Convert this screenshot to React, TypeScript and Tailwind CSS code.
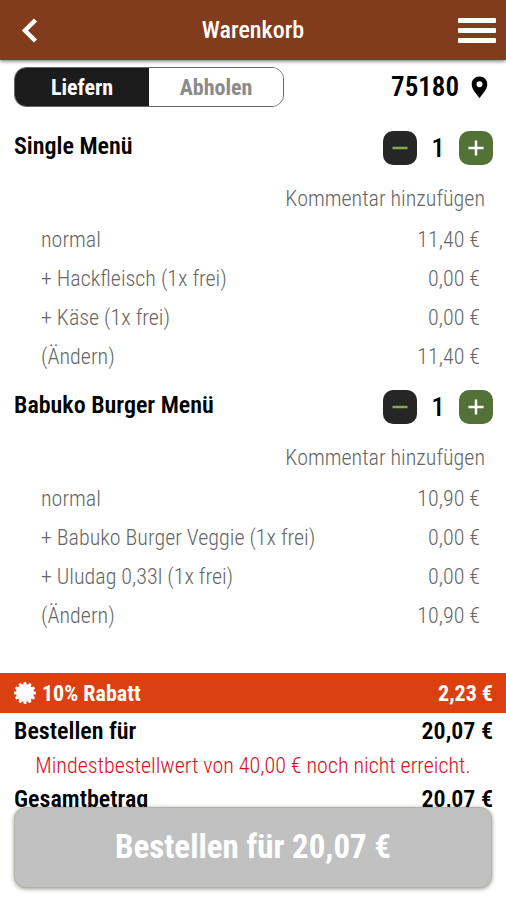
import { useState } from "react";
import { clsx } from "clsx";

type CartItem = {
  name: string;
  price: string;
  extras: string[];
};

const initialItems: CartItem[] = [
  {
    name: "Single Menü",
    price: "11,40 €",
    extras: ["+ Hackfleisch (1x frei)", "+ Käse (1x frei)"],
  },
  {
    name: "Babuko Burger Menü",
    price: "10,90 €",
    extras: ["+ Babuko Burger Veggie (1x frei)", "+ Uludag 0,33l (1x frei)"],
  },
];

function Header() {
  return (
    <header className="relative z-10 grid h-[60px] shrink-0 grid-cols-[1fr_auto_1fr] items-center bg-[#833b1d] px-2 text-white shadow-[0_1px_4px_rgba(0,0,0,0.6)]">
      <button aria-label="Zurück" className="flex h-11 w-11 items-center justify-center">
        <svg width="20" height="28" viewBox="0 0 20 28" fill="none" stroke="currentColor" strokeWidth="4.5">
          <path d="M15.500 4 5 14.500 15.500 25" />
        </svg>
      </button>
      <h1 className="text-[24px] font-medium">Warenkorb</h1>
      <button aria-label="Menü" className="flex h-11 items-center justify-self-end pr-0.5">
        <svg width="38" height="26" viewBox="0 0 38 26" fill="currentColor">
          <rect y="1" width="38" height="5" rx="1" />
          <rect y="11" width="38" height="5" rx="1" />
          <rect y="21" width="38" height="5" rx="1" />
        </svg>
      </button>
    </header>
  );
}

function DeliveryBar() {
  const [mode, setMode] = useState("Liefern");

  return (
    <div className="flex h-10 items-center justify-between px-3.5">
      <div className="flex h-10 w-[270px] overflow-hidden rounded-xl border border-[#666]">
        {["Liefern", "Abholen"].map((label) => (
          <button
            key={label}
            aria-pressed={mode === label}
            onClick={() => setMode(label)}
            className={clsx(
              "flex-1 text-[22px] font-bold",
              mode === label ? "bg-[#1b1b1b] text-white" : "bg-white text-[#8b8b8b]"
            )}
          >
            {label}
          </button>
        ))}
      </div>
      <button className="flex items-center gap-3 pr-1 text-[27px] font-semibold">
        75180
        <svg width="17" height="23" viewBox="0 0 17 23" fill="currentColor">
          <path
            fillRule="evenodd"
            d="M8.500 .5C4 .5 .7 3.900 .7 8.200c0 5 4.600 9.400 7.800 14 3.200-4.600 7.800-9 7.800-14C16.300 3.900 13 .5 8.500 .5Zm0 4.800a3 3 0 1 1 0 6 3 3 0 0 1 0-6Z"
          />
        </svg>
      </button>
    </div>
  );
}

function Line({ label, price }: { label: string; price: string }) {
  return (
    <li className="flex h-[39px] items-center justify-between">
      <span>{label}</span>
      <span>{price}</span>
    </li>
  );
}

function Item({ item }: { item: CartItem }) {
  const [count, setCount] = useState(1);

  return (
    <section className="pb-3.5">
      <div className="flex h-[34px] items-center justify-between pr-[13px] pl-3.5">
        <h2 className="pb-1 text-[24px] font-semibold">{item.name}</h2>
        <div className="flex items-center">
          <button
            aria-label="Weniger"
            onClick={() => setCount(Math.max(0, count - 1))}
            className="flex h-[34px] w-[34px] items-center justify-center rounded-[10px] bg-[#262626] text-[#7cab50]"
          >
            <svg width="16" height="16" viewBox="0 0 16 16" fill="none" stroke="currentColor" strokeWidth="2.500">
              <path d="M.5 8h15" />
            </svg>
          </button>
          <span className="w-[42px] text-center text-[26px] font-medium">{count}</span>
          <button
            aria-label="Mehr"
            onClick={() => setCount(count + 1)}
            className="flex h-[34px] w-[34px] items-center justify-center rounded-[10px] bg-[#527238] text-white"
          >
            <svg width="16" height="16" viewBox="0 0 16 16" fill="none" stroke="currentColor" strokeWidth="2.500">
              <path d="M.5 8h15M8 .5v15" />
            </svg>
          </button>
        </div>
      </div>
      <div className="mt-3.5 flex h-[41px] items-start justify-end pr-[21px] text-[22px] font-light text-[#666]">
        <button className="h-[39px]">Kommentar hinzufügen</button>
      </div>
      <ul className="pr-[26px] pl-[41px] text-[22px] font-light text-[#666]">
        <Line label="normal" price={item.price} />
        {item.extras.map((extra) => (
          <Line key={extra} label={extra} price="0,00 €" />
        ))}
        <li className="flex h-[39px] items-center justify-between">
          <button>(Ändern)</button>
          <span>{item.price}</span>
        </li>
      </ul>
    </section>
  );
}

function Badge() {
  return (
    <svg width="22" height="22" viewBox="-11 -11 22 22" fill="currentColor">
      <circle r="9" />
      {[0, 30, 60, 90, 120, 150].map((angle) => (
        <rect key={angle} x="-1.500" y="-11" width="3" height="22" rx="1" transform={`rotate(${angle})`} />
      ))}
    </svg>
  );
}

function TotalRow({ label, value }: { label: string; value: string }) {
  return (
    <div className="flex h-[36px] items-center justify-between pr-[13px] pl-3.5 text-[24px] font-semibold">
      <span>{label}</span>
      <span>{value}</span>
    </div>
  );
}

export default function App() {
  return (
    <div className="flex h-screen flex-col bg-white font-['Roboto_Condensed','Roboto',sans-serif] text-black">
      <Header />
      <main className="min-h-0 flex-1 overflow-y-auto pt-[7px] [scrollbar-width:none]">
        <DeliveryBar />
        <div className="pt-6">
          {initialItems.map((item) => (
            <Item key={item.name} item={item} />
          ))}
        </div>

        <div className="mt-6 flex h-10 items-center gap-1.5 bg-[#dc4010] pr-[13px] pl-3.5 text-[22px] font-bold text-white">
          <Badge />
          <span>10% Rabatt</span>
          <span className="ml-auto">2,23 €</span>
        </div>
        <TotalRow label="Bestellen für" value="20,07 €" />
        <p className="flex h-8 items-center justify-center text-[22px] font-light text-[#d8101c]">
          Mindestbestellwert von 40,00 € noch nicht erreicht.
        </p>
        <TotalRow label="Gesamtbetrag" value="20,07 €" />
      </main>
      <footer className="shrink-0 px-3.5 pb-3">
        <button className="h-[81px] w-full rounded-xl border border-[#b1b5a6] bg-[#c1c1c1] pb-0.5 text-[33px] font-bold text-white shadow-[0_1px_4px_rgba(0,0,0,0.4)]">
          Bestellen für 20,07 €
        </button>
      </footer>
    </div>
  );
}
